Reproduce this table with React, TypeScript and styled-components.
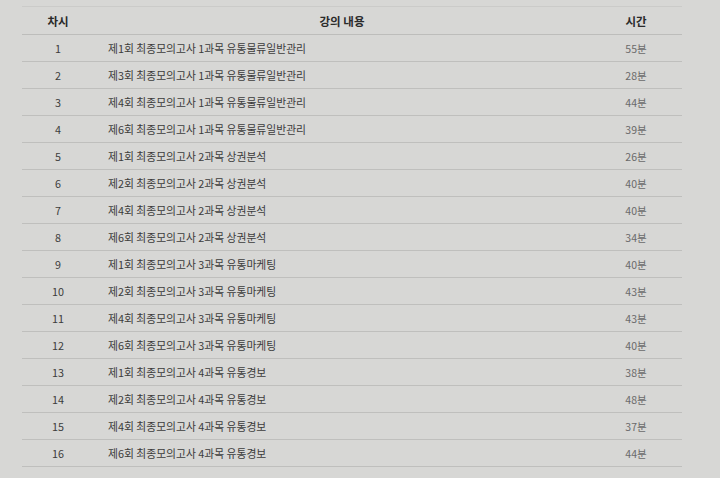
import styled, { createGlobalStyle } from "styled-components";

const GlobalStyle = createGlobalStyle`
  html, body {
    margin: 0;
    background: #d7d7d5;
  }
  body {
    font-family: "Noto Sans CJK KR", "Noto Sans", sans-serif;
  }
`;

const Page = styled.div`
  padding: 6px 0 0 22px;
  width: 720px;
  height: 478px;
  box-sizing: border-box;
  overflow: hidden;
`;

const Table = styled.table`
  width: 660px;
  border-collapse: collapse;
  table-layout: fixed;
  border-top: 1px solid #cbcbc9;
`;

const HeadCell = styled.th<{ $w?: number }>`
  width: ${(p) => (p.$w ? `${p.$w}px` : "auto")};
  height: 27px;
  padding: 0;
  font-size: 11.5px;
  font-weight: 700;
  color: #2a2a2a;
  text-align: center;
  border-bottom: 1px solid #bdbdbb;
`;

const Row = styled.tr`
  height: 27px;
  border-bottom: 1px solid #bfbfbd;
`;

const NumCell = styled.td`
  padding: 0;
  font-size: 10.8px;
  color: #3c3c3c;
  text-align: center;
`;

const TitleCell = styled.td`
  padding: 0 0 0 14px;
  font-size: 10.8px;
  color: #3c3c3c;
  white-space: nowrap;
`;

const TimeCell = styled.td`
  padding: 0;
  font-size: 10.5px;
  color: #6a6a6a;
  text-align: center;
`;

const lectures: [string, string][] = [
  ["제1회 최종모의고사 1과목 유통물류일반관리", "55분"],
  ["제3회 최종모의고사 1과목 유통물류일반관리", "28분"],
  ["제4회 최종모의고사 1과목 유통물류일반관리", "44분"],
  ["제6회 최종모의고사 1과목 유통물류일반관리", "39분"],
  ["제1회 최종모의고사 2과목 상권분석", "26분"],
  ["제2회 최종모의고사 2과목 상권분석", "40분"],
  ["제4회 최종모의고사 2과목 상권분석", "40분"],
  ["제6회 최종모의고사 2과목 상권분석", "34분"],
  ["제1회 최종모의고사 3과목 유통마케팅", "40분"],
  ["제2회 최종모의고사 3과목 유통마케팅", "43분"],
  ["제4회 최종모의고사 3과목 유통마케팅", "43분"],
  ["제6회 최종모의고사 3과목 유통마케팅", "40분"],
  ["제1회 최종모의고사 4과목 유통경보", "38분"],
  ["제2회 최종모의고사 4과목 유통경보", "48분"],
  ["제4회 최종모의고사 4과목 유통경보", "37분"],
  ["제6회 최종모의고사 4과목 유통경보", "44분"],
];

export default function App() {
  return (
    <Page>
      <GlobalStyle />
      <Table>
        <thead>
          <tr>
            <HeadCell $w={72}>차시</HeadCell>
            <HeadCell>강의 내용</HeadCell>
            <HeadCell $w={92}>시간</HeadCell>
          </tr>
        </thead>
        <tbody>
          {lectures.map(([title, time], i) => (
            <Row key={i}>
              <NumCell>{i + 1}</NumCell>
              <TitleCell>{title}</TitleCell>
              <TimeCell>{time}</TimeCell>
            </Row>
          ))}
        </tbody>
      </Table>
    </Page>
  );
}
